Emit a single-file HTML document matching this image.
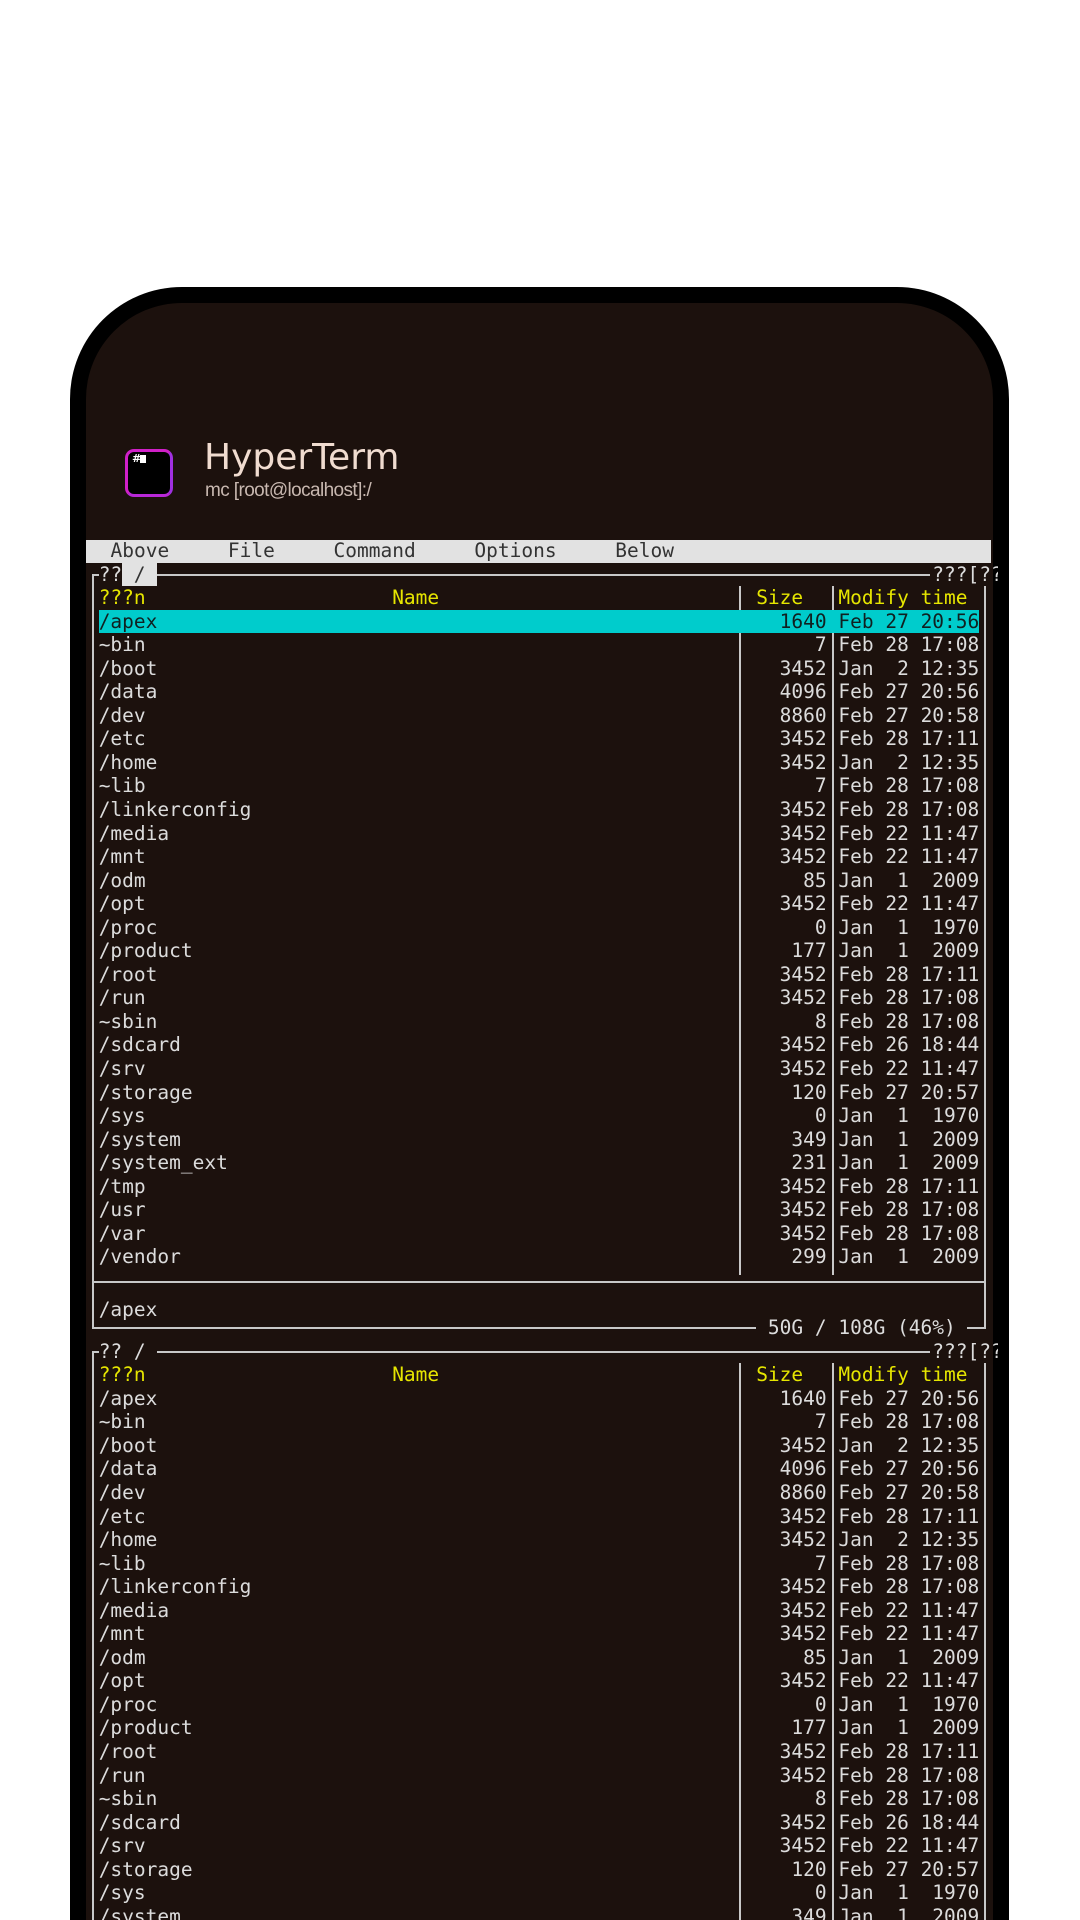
<!DOCTYPE html>
<html><head><meta charset="utf-8"><style>
html,body{margin:0;padding:0;width:1080px;height:1920px;overflow:hidden;background:#fff}
#wrap{position:relative;width:1080px;height:1920px;overflow:hidden;background:#fff}
.frame{position:absolute;left:70px;top:287px;width:939px;height:1633px;background:#000;border-radius:112px 112px 0 0}
.inner{position:absolute;left:86px;top:303px;width:907px;height:1617px;background:#1c110d;border-radius:96px 96px 0 0;overflow:hidden}
.t{position:absolute;font-family:"DejaVu Sans Mono","Liberation Mono",monospace;font-size:19.5px;line-height:23.55px;white-space:pre;color:#dcdcdc}
.y{color:#e6e600}
.h{position:absolute;height:2px;background:#c8c8c8}
.v{position:absolute;width:2px;background:#c8c8c8}
.list{position:absolute;left:0;width:1080px}
.list div{position:relative;height:23.55px}
.list span{position:absolute;top:0;font-family:"DejaVu Sans Mono","Liberation Mono",monospace;font-size:19.5px;line-height:23.55px;white-space:pre;color:#dcdcdc}
.list .n{left:98.7px}
.list .s{right:253.4px;text-align:right}
.list .d{left:838.4px}
</style></head><body><div id="wrap">
<div class="frame"></div>
<div class="inner"></div>
<div style="position:absolute;left:125px;top:449px;width:42px;height:42px;border:3px solid #d020c8;border-radius:9px;background:#000;border-right-color:#a030e0;border-bottom-color:#b828d8"></div>
<div style="position:absolute;left:132px;top:452px;font:bold 11px 'DejaVu Sans',sans-serif;color:#fff">#</div>
<div style="position:absolute;left:140px;top:455px;width:6px;height:8px;background:#fff"></div>
<div style="position:absolute;left:204px;top:436px;font-family:'DejaVu Sans','Liberation Sans',sans-serif;font-size:36px;color:#f0dcd0;line-height:44px">HyperTerm</div>
<div style="position:absolute;left:205px;top:479px;font-family:'Liberation Sans',sans-serif;font-size:19px;color:#c8b8b0;line-height:24px;letter-spacing:-0.6px">mc [root@localhost]:/</div>

<div style="position:absolute;left:86px;top:540px;width:905px;height:23px;background:#e2e2e2"></div>
<div class="t" style="left:87px;top:539px;color:#333">  Above     File     Command     Options     Below</div>

<div class="h" style="left:93px;top:574px;width:6px"></div>
<div class="t" style="left:98.7px;top:562.5px">??</div>
<div style="position:absolute;left:122px;top:563px;width:35px;height:23px;background:#e2e2e2"></div>
<div class="t" style="left:122px;top:562.5px;color:#333"> / </div>
<div class="h" style="left:157px;top:574px;width:773px"></div>
<div class="t" style="left:932.3px;top:562.5px;width:66px;overflow:hidden">???[??</div>
<div class="v" style="left:92px;top:574px;height:755px"></div>
<div class="v" style="left:984px;top:586px;height:743px"></div>
<div class="v" style="left:739px;top:586px;height:689px"></div>
<div class="v" style="left:832px;top:586px;height:689px"></div>
<div class="t y" style="left:98.7px;top:586.1px">???n</div>
<div class="t y" style="left:392.2px;top:586.1px">Name</div>
<div class="t y" style="left:756.2px;top:586.1px">Size</div>
<div class="t y" style="left:838.4px;top:586.1px">Modify time</div>

<div class="list" style="top:609.65px">
<div><span style="left:98.7px;width:880px;height:23.55px;background:#00cccc"></span><span class="n" style="color:#102020">/apex</span><span class="s" style="color:#102020">1640</span><span class="d" style="color:#102020">Feb 27 20:56</span></div>
<div><span class="n">~bin</span><span class="s">7</span><span class="d">Feb 28 17:08</span></div>
<div><span class="n">/boot</span><span class="s">3452</span><span class="d">Jan  2 12:35</span></div>
<div><span class="n">/data</span><span class="s">4096</span><span class="d">Feb 27 20:56</span></div>
<div><span class="n">/dev</span><span class="s">8860</span><span class="d">Feb 27 20:58</span></div>
<div><span class="n">/etc</span><span class="s">3452</span><span class="d">Feb 28 17:11</span></div>
<div><span class="n">/home</span><span class="s">3452</span><span class="d">Jan  2 12:35</span></div>
<div><span class="n">~lib</span><span class="s">7</span><span class="d">Feb 28 17:08</span></div>
<div><span class="n">/linkerconfig</span><span class="s">3452</span><span class="d">Feb 28 17:08</span></div>
<div><span class="n">/media</span><span class="s">3452</span><span class="d">Feb 22 11:47</span></div>
<div><span class="n">/mnt</span><span class="s">3452</span><span class="d">Feb 22 11:47</span></div>
<div><span class="n">/odm</span><span class="s">85</span><span class="d">Jan  1  2009</span></div>
<div><span class="n">/opt</span><span class="s">3452</span><span class="d">Feb 22 11:47</span></div>
<div><span class="n">/proc</span><span class="s">0</span><span class="d">Jan  1  1970</span></div>
<div><span class="n">/product</span><span class="s">177</span><span class="d">Jan  1  2009</span></div>
<div><span class="n">/root</span><span class="s">3452</span><span class="d">Feb 28 17:11</span></div>
<div><span class="n">/run</span><span class="s">3452</span><span class="d">Feb 28 17:08</span></div>
<div><span class="n">~sbin</span><span class="s">8</span><span class="d">Feb 28 17:08</span></div>
<div><span class="n">/sdcard</span><span class="s">3452</span><span class="d">Feb 26 18:44</span></div>
<div><span class="n">/srv</span><span class="s">3452</span><span class="d">Feb 22 11:47</span></div>
<div><span class="n">/storage</span><span class="s">120</span><span class="d">Feb 27 20:57</span></div>
<div><span class="n">/sys</span><span class="s">0</span><span class="d">Jan  1  1970</span></div>
<div><span class="n">/system</span><span class="s">349</span><span class="d">Jan  1  2009</span></div>
<div><span class="n">/system_ext</span><span class="s">231</span><span class="d">Jan  1  2009</span></div>
<div><span class="n">/tmp</span><span class="s">3452</span><span class="d">Feb 28 17:11</span></div>
<div><span class="n">/usr</span><span class="s">3452</span><span class="d">Feb 28 17:08</span></div>
<div><span class="n">/var</span><span class="s">3452</span><span class="d">Feb 28 17:08</span></div>
<div><span class="n">/vendor</span><span class="s">299</span><span class="d">Jan  1  2009</span></div>
</div>
<div class="h" style="left:92px;top:1281px;width:894px"></div>
<div class="t" style="left:98.7px;top:1298px">/apex</div>
<div class="h" style="left:92px;top:1327px;width:664px"></div>
<div class="t" style="left:756.2px;top:1316px"> 50G / 108G (46%) </div>
<div class="h" style="left:967px;top:1327px;width:19px"></div>

<div class="h" style="left:93px;top:1351px;width:6px"></div>
<div class="t" style="left:98.7px;top:1339.7px">?? / </div>
<div class="h" style="left:157px;top:1351px;width:773px"></div>
<div class="t" style="left:932.3px;top:1339.7px;width:66px;overflow:hidden">???[??</div>
<div class="v" style="left:92px;top:1351px;height:569px"></div>
<div class="v" style="left:984px;top:1363px;height:557px"></div>
<div class="v" style="left:739px;top:1363px;height:557px"></div>
<div class="v" style="left:832px;top:1363px;height:557px"></div>
<div class="t y" style="left:98.7px;top:1363.3px">???n</div>
<div class="t y" style="left:392.2px;top:1363.3px">Name</div>
<div class="t y" style="left:756.2px;top:1363.3px">Size</div>
<div class="t y" style="left:838.4px;top:1363.3px">Modify time</div>
<div style="position:absolute;left:0;top:1386.8px;width:1080px;height:533.2px;overflow:hidden">
<div class="list" style="top:0">
<div><span class="n">/apex</span><span class="s">1640</span><span class="d">Feb 27 20:56</span></div>
<div><span class="n">~bin</span><span class="s">7</span><span class="d">Feb 28 17:08</span></div>
<div><span class="n">/boot</span><span class="s">3452</span><span class="d">Jan  2 12:35</span></div>
<div><span class="n">/data</span><span class="s">4096</span><span class="d">Feb 27 20:56</span></div>
<div><span class="n">/dev</span><span class="s">8860</span><span class="d">Feb 27 20:58</span></div>
<div><span class="n">/etc</span><span class="s">3452</span><span class="d">Feb 28 17:11</span></div>
<div><span class="n">/home</span><span class="s">3452</span><span class="d">Jan  2 12:35</span></div>
<div><span class="n">~lib</span><span class="s">7</span><span class="d">Feb 28 17:08</span></div>
<div><span class="n">/linkerconfig</span><span class="s">3452</span><span class="d">Feb 28 17:08</span></div>
<div><span class="n">/media</span><span class="s">3452</span><span class="d">Feb 22 11:47</span></div>
<div><span class="n">/mnt</span><span class="s">3452</span><span class="d">Feb 22 11:47</span></div>
<div><span class="n">/odm</span><span class="s">85</span><span class="d">Jan  1  2009</span></div>
<div><span class="n">/opt</span><span class="s">3452</span><span class="d">Feb 22 11:47</span></div>
<div><span class="n">/proc</span><span class="s">0</span><span class="d">Jan  1  1970</span></div>
<div><span class="n">/product</span><span class="s">177</span><span class="d">Jan  1  2009</span></div>
<div><span class="n">/root</span><span class="s">3452</span><span class="d">Feb 28 17:11</span></div>
<div><span class="n">/run</span><span class="s">3452</span><span class="d">Feb 28 17:08</span></div>
<div><span class="n">~sbin</span><span class="s">8</span><span class="d">Feb 28 17:08</span></div>
<div><span class="n">/sdcard</span><span class="s">3452</span><span class="d">Feb 26 18:44</span></div>
<div><span class="n">/srv</span><span class="s">3452</span><span class="d">Feb 22 11:47</span></div>
<div><span class="n">/storage</span><span class="s">120</span><span class="d">Feb 27 20:57</span></div>
<div><span class="n">/sys</span><span class="s">0</span><span class="d">Jan  1  1970</span></div>
<div><span class="n">/system</span><span class="s">349</span><span class="d">Jan  1  2009</span></div>
</div>
</div>
</div></body></html>
